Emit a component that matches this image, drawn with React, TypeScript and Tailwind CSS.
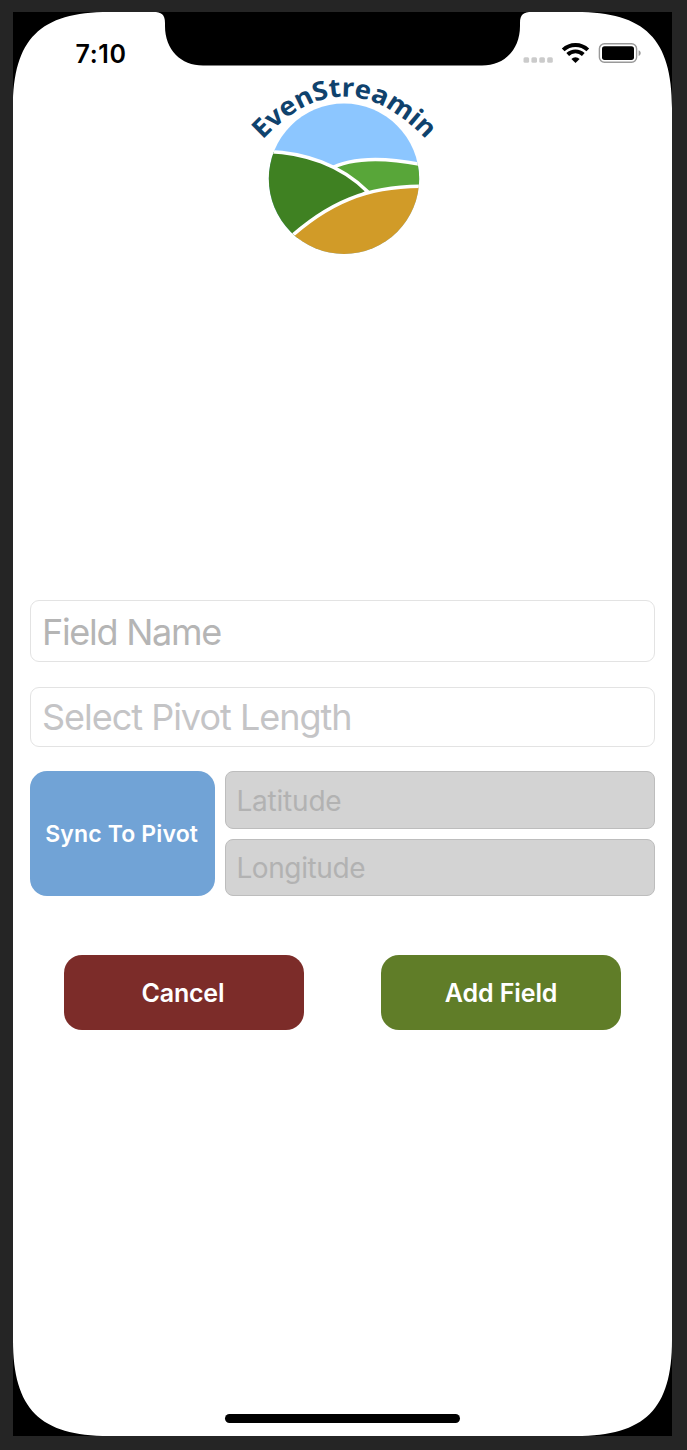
import React from "react";

const CORNER = "M0 0H96C27 0 0 27 0 96Z";

function Corner({ className }: { className: string }) {
  return (
    <svg className={`absolute size-[109px] ${className}`} viewBox="0 0 109 109" aria-hidden="true">
      <path d={CORNER} fill="#000" />
    </svg>
  );
}

function Notch() {
  return (
    <svg
      className="absolute left-[140px] top-0 h-[54px] w-[380px]"
      viewBox="0 0 380 54"
      aria-hidden="true"
    >
      <path
        d="M0 0C8.500 0 12 2.500 12 11V14C12 38 28 53.500 50 53.500H329C351 53.500 367 38 367 14V11C367 2.500 370.500 0 379 0Z"
        fill="#000"
      />
    </svg>
  );
}

function StatusIcons() {
  return (
    <svg className="h-6 w-[122px]" viewBox="522 41 122 24" aria-hidden="true">
      <g fill="#cbcbcb">
        <rect x="523.5" y="57.300" width="5.600" height="5.400" rx="1.500" />
        <rect x="531.400" y="57.300" width="5.600" height="5.400" rx="1.500" />
        <rect x="539.300" y="57.300" width="5.600" height="5.400" rx="1.500" />
        <rect x="547.200" y="57.300" width="5.600" height="5.400" rx="1.500" />
      </g>
      <g fill="none" stroke="#000" strokeWidth="3.900">
        <path d="M563.200 49.900A17.700 17.700 0 0 1 587.800 49.900" />
        <path d="M567.700 54.500A11.200 11.200 0 0 1 583.300 54.500" />
      </g>
      <path d="M575.500 62.900L571.400 58.900A5.900 5.900 0 0 1 579.600 58.900Z" fill="#000" />
      <rect x="599.400" y="43.700" width="37.200" height="18.600" rx="5" fill="none" stroke="#999" strokeWidth="1.400" />
      <rect x="602" y="46.300" width="32" height="13.600" rx="2.600" fill="#000" />
      <path d="M638.600 50.200C641.400 51.200 641.400 54.900 638.600 56Z" fill="#999" />
    </svg>
  );
}

function Logo() {
  return (
    <svg className="h-[190px] w-[200px] overflow-visible" viewBox="244 70 200 190" role="img" aria-label="EvenStreamin">
      <defs>
        <clipPath id="disc">
          <circle cx="344" cy="178.800" r="75.200" />
        </clipPath>
        <path id="arc" d="M262.500 140Q344 53.500 426 139.500L440 154" />
      </defs>
      <g clipPath="url(#disc)">
        <rect x="260" y="100" width="170" height="160" fill="#8cc6ff" />
        <path
          d="M328 170C345 160 375 155 424 165V187L366 196Z"
          fill="#58a639"
          stroke="#fff"
          strokeWidth="3.500"
        />
        <path
          d="M262 151.300C305 151.300 342 166 367.500 191.500L292 245H255Z"
          fill="#3f8122"
          stroke="#fff"
          strokeWidth="3.500"
        />
        <path
          d="M285 242C328 202 367 186 424 186.300V260H285Z"
          fill="#d19b28"
          stroke="#fff"
          strokeWidth="3.500"
        />
      </g>
      <text
        fill="#0f426d"
        className="font-['Noto_Sans',sans-serif] text-[26px] font-bold"
        textLength="190"
        lengthAdjust="spacingAndGlyphs"
      >
        <textPath href="#arc" textLength="190" lengthAdjust="spacingAndGlyphs">
          EvenStreamin
        </textPath>
      </text>
    </svg>
  );
}

export default function App() {
  return (
    <div className="h-[1450px] w-[687px] bg-[#252525] pl-[13.4px] pt-3 font-['Inter','Liberation_Sans',sans-serif]">
      <main className="relative flex h-[1424px] w-[658.200px] flex-col bg-white">
        <Corner className="left-0 top-0" />
        <Corner className="right-0 top-0 rotate-90" />
        <Corner className="bottom-0 right-0 rotate-180" />
        <Corner className="bottom-0 left-0 -rotate-90" />
        <Notch />

        <header className="flex h-[58px] items-start justify-between pl-[62px] pr-[28px] pt-[29px]">
          <span className="text-[25px] font-semibold leading-[26px] tracking-[0.7px] text-black">7:10</span>
          <StatusIcons />
        </header>

        <div className="flex justify-center pl-[3px]">
          <Logo />
        </div>

        <form className="mt-[340px] flex flex-col pl-[17px] pr-[16.500px]" onSubmit={(e) => e.preventDefault()}>
          <input
            className="h-[62px] w-full rounded-[9px] border border-[#e3e3e3] bg-white px-[10.500px] pt-[2px] text-[36px] tracking-[-1.250px] outline-none placeholder:text-[#b5b5b5]"
            placeholder="Field Name"
          />
          <input
            className="mt-[25px] h-[60px] w-full rounded-[9px] border border-[#e3e3e3] bg-white px-[10.500px] text-[36px] tracking-[-1px] outline-none placeholder:text-[#c4c4c6]"
            placeholder="Select Pivot Length"
          />
          <div className="mt-6 flex h-[125px] gap-[10px]">
            <button
              type="button"
              className="w-[184.500px] rounded-[17px] bg-[#71a3d6] pr-[2px] pt-[2px] text-[23px] font-semibold tracking-[0.150px] whitespace-nowrap text-white"
            >
              Sync To Pivot
            </button>
            <div className="flex flex-1 flex-col gap-[10px]">
              <input
                className="h-[57.500px] w-full rounded-lg border border-[#bdbdbd] bg-[#d3d3d3] px-[10.500px] pt-[2px] text-[28px] tracking-[-0.200px] outline-none placeholder:text-[#b2b2b2]"
                placeholder="Latitude"
              />
              <input
                className="h-[57.500px] w-full rounded-lg border border-[#bdbdbd] bg-[#d3d3d3] px-[10.500px] pt-[2px] text-[28px] tracking-[-0.400px] outline-none placeholder:text-[#b2b2b2]"
                placeholder="Longitude"
              />
            </div>
          </div>
          <div className="mt-[59px] flex justify-between pl-[33.500px] pr-[34px]">
            <button type="button" className="h-[74.500px] w-60 rounded-[18px] bg-[#7c2c29] pr-[2px] pt-[2px] text-[25px] font-semibold tracking-[-0.200px] text-white">
              Cancel
            </button>
            <button type="button" className="h-[74.500px] w-60 rounded-[18px] bg-[#607d28] pt-[2px] text-[25px] font-semibold tracking-[-0.100px] text-white">
              Add Field
            </button>
          </div>
        </form>

        <div className="mt-auto mb-[13px] h-[9px] w-[235px] self-center rounded-full bg-black" />
      </main>
    </div>
  );
}
